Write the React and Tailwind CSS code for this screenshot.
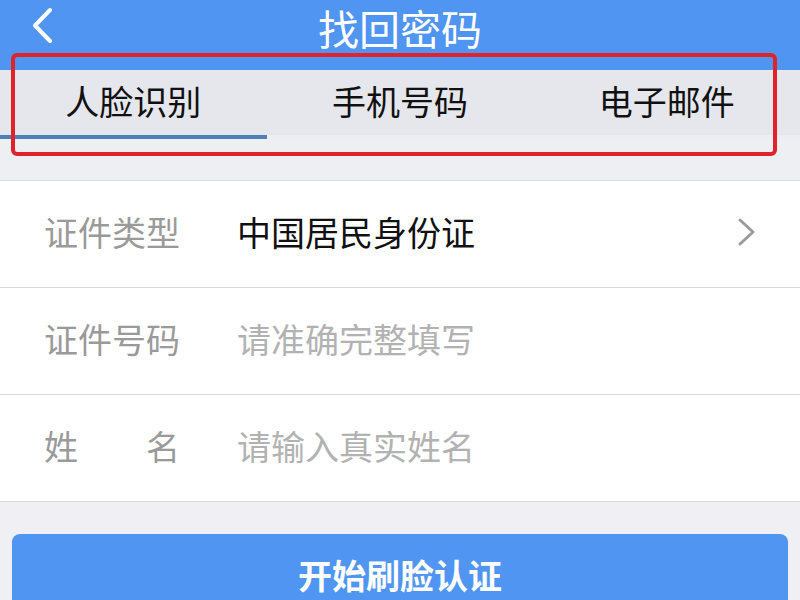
import React from "react";

const font = { fontFamily: '"Noto Sans CJK SC", "Noto Sans", sans-serif' };

function Row({ label, value, valueClass, chevron, justify }) {
  return (
    <div className="flex h-[107px] items-center border-b border-[#d9d9dd] pb-[4px] pl-[44px] pr-[42px]">
      {justify ? (
        <div className="flex w-[136px] justify-between text-[34px] leading-none text-[#9a9a9a]">
          <span>姓</span>
          <span>名</span>
        </div>
      ) : (
        <div className="w-[136px] text-[34px] leading-none text-[#9a9a9a] whitespace-nowrap">{label}</div>
      )}
      <div className={`ml-[57px] flex-1 text-[34px] leading-none whitespace-nowrap ${valueClass}`}>{value}</div>
      {chevron && (
        <svg width="22" height="30" viewBox="0 0 22 30" className="shrink-0">
          <path d="M4 3 L17 15 L4 27" fill="none" stroke="#9b9b9b" strokeWidth="3" strokeLinecap="round" strokeLinejoin="round" />
        </svg>
      )}
    </div>
  );
}

export default function App() {
  return (
    <div className="relative h-[600px] w-[800px] overflow-hidden bg-[#efeff4]" style={font}>
      {/* Header */}
      <div className="relative flex h-[70px] items-start justify-center bg-[#4f95f1]">
        <svg width="30" height="40" viewBox="0 0 30 40" className="absolute left-[28px] top-[6px]">
          <path d="M22 4 L7 19.5 L22 35" fill="none" stroke="#ffffff" strokeWidth="4" strokeLinecap="round" strokeLinejoin="round" />
        </svg>
        <div className="text-[41px] leading-[54px] text-white">找回密码</div>
      </div>

      {/* Tabs */}
      <div className="flex h-[69px] bg-[#e6e7ec]">
        <div className="flex flex-1 flex-col">
          <div className="flex flex-1 items-center justify-center pb-[4px] text-[34px] leading-none text-[#111]">人脸识别</div>
          <div className="h-[4px] bg-[#4b80b8]" />
        </div>
        <div className="flex flex-1 flex-col">
          <div className="flex flex-1 items-center justify-center pb-[4px] text-[34px] leading-none text-[#111]">手机号码</div>
          <div className="h-[4px] bg-[#eceef2]" />
        </div>
        <div className="flex flex-1 flex-col">
          <div className="flex flex-1 items-center justify-center pb-[4px] text-[34px] leading-none text-[#111]">电子邮件</div>
          <div className="h-[4px] bg-[#eceef2]" />
        </div>
      </div>

      <div className="h-[42px] border-b border-[#d9d9dd] bg-[#eeeff3]" />

      {/* Form */}
      <div className="bg-white">
        <Row label="证件类型" value="中国居民身份证" valueClass="text-[#111]" chevron />
        <Row label="证件号码" value="请准确完整填写" valueClass="text-[#b2b2b2]" />
        <Row justify value="请输入真实姓名" valueClass="text-[#b2b2b2]" />
      </div>

      {/* Button */}
      <div className="px-[12px] pt-[32px]">
        <div className="flex h-[90px] items-start justify-center rounded-[8px] bg-[#4f95f1] pt-[24px] text-[34px] font-semibold leading-none text-white">
          开始刷脸认证
        </div>
      </div>

      {/* Red annotation box */}
      <div className="pointer-events-none absolute left-[11px] top-[53px] h-[103px] w-[766px] rounded-[6px] border-[4px] border-[#e0232a]" />
    </div>
  );
}
